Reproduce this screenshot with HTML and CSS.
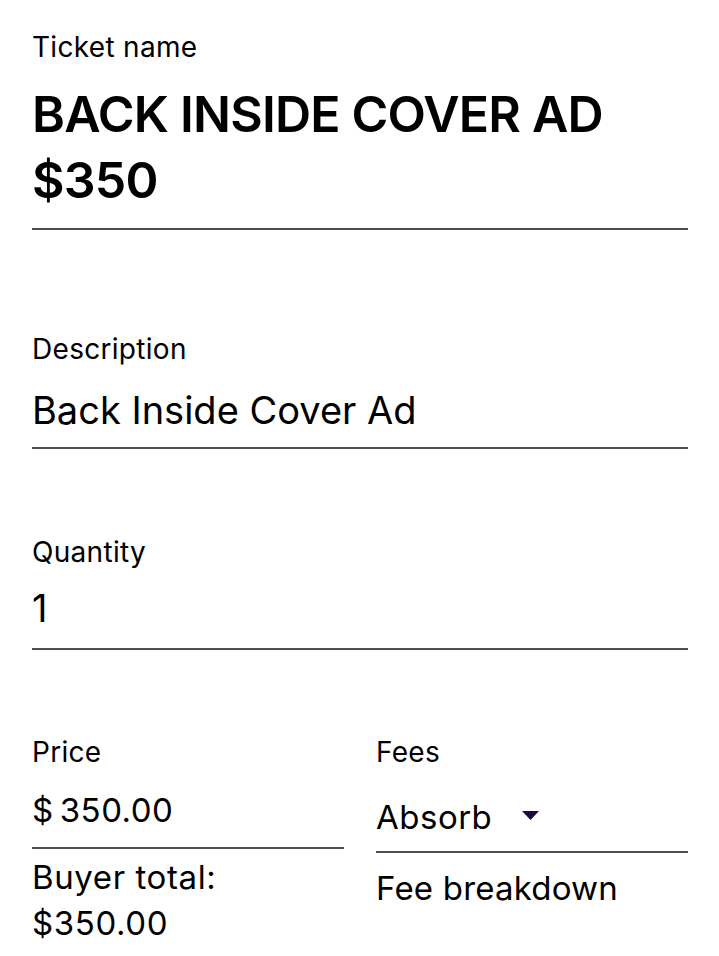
FILE: index.html
```html
<!DOCTYPE html>
<html>
<head>
	<title>Edit ticket</title>
	<link rel="stylesheet" href="styles.css">
</head>
<body>
	<main class="ticket-form">

		<div class="field field-title">
			<div class="label">Ticket name</div>
			<div class="title-value">BACK INSIDE COVER AD $350</div>
		</div>

		<div class="field field-desc">
			<div class="label">Description</div>
			<div class="big-value">Back Inside Cover Ad</div>
		</div>

		<div class="field field-qty">
			<div class="label">Quantity</div>
			<div class="big-value">1</div>
		</div>

		<div class="price-row">
			<div class="col">
				<div class="field field-price">
					<div class="label">Price</div>
					<div class="value"><span class="currency">$</span>350.00</div>
				</div>
				<div class="note">Buyer total:<br>$350.00</div>
			</div>
			<div class="col">
				<div class="field field-fees">
					<div class="label">Fees</div>
					<div class="select">
						<span class="value">Absorb</span>
						<svg class="caret" width="17" height="9" viewBox="0 0 17 9"><path d="M0 0 L17 0 L8.5 9 Z" fill="#1e0a3c"/></svg>
					</div>
				</div>
				<div class="note note-fees">Fee breakdown</div>
			</div>
		</div>

	</main>
</body>
</html>
```

FILE: styles.css
```css
body{
	margin: 0;
	background: #fff;
	color: #000;
	font-family: Inter, "Noto Sans", sans-serif;
}

.ticket-form{
	padding: 30px 31px 0 32px;
}

.field{
	border-bottom: 2px solid #4d4d57;
}

.label{
	font-size: 28px;
	line-height: 34px;
	letter-spacing: 0.3px;
}

.field-title{
	padding-bottom: 15px;
}
.title-value{
	margin-top: 17px;
	font-size: 50px;
	line-height: 66px;
	font-weight: 600;
	letter-spacing: -0.8px;
	width: 600px;
}

.field-desc{
	margin-top: 102px;
	padding-bottom: 14px;
}
.big-value{
	margin-top: 21px;
	font-size: 38px;
	line-height: 46px;
}

.field-qty{
	margin-top: 86px;
	padding-bottom: 17px;
}
.field-qty .big-value{
	margin-top: 16px;
}

.price-row{
	margin-top: 85px;
	display: grid;
	grid-template-columns: 1fr 1fr;
	column-gap: 32px;
}

.value{
	font-size: 33px;
	line-height: 40px;
	letter-spacing: 0.5px;
}

.field-price{
	padding-bottom: 17px;
}
.field-price .value{
	margin-top: 21px;
}
.currency{
	margin-right: 6px;
}

.note{
	margin-top: 5px;
	font-size: 33px;
	line-height: 46px;
	letter-spacing: 0.6px;
}

.field-fees{
	padding-bottom: 14px;
}
.select{
	margin-top: 28px;
	display: flex;
	align-items: center;
	gap: 30px;
}
.caret{
	margin-top: -4px;
}

.note-fees{
	margin-top: 15px;
	line-height: 40px;
	letter-spacing: 0.2px;
}
```
